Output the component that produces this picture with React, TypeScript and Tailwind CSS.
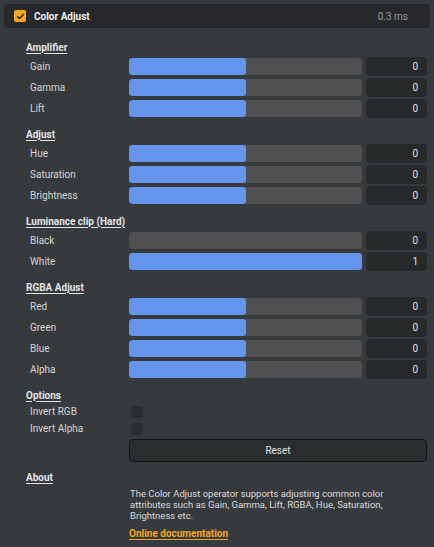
import React from 'react';

type Param = { label: string; value: number; fill: number };
type Group = { title: string; params: Param[] };

const groups: Group[] = [
  {
    title: 'Amplifier',
    params: [
      { label: 'Gain', value: 0, fill: 0.5 },
      { label: 'Gamma', value: 0, fill: 0.5 },
      { label: 'Lift', value: 0, fill: 0.5 },
    ],
  },
  {
    title: 'Adjust',
    params: [
      { label: 'Hue', value: 0, fill: 0.5 },
      { label: 'Saturation', value: 0, fill: 0.5 },
      { label: 'Brightness', value: 0, fill: 0.5 },
    ],
  },
  {
    title: 'Luminance clip (Hard)',
    params: [
      { label: 'Black', value: 0, fill: 0 },
      { label: 'White', value: 1, fill: 1 },
    ],
  },
  {
    title: 'RGBA Adjust',
    params: [
      { label: 'Red', value: 0, fill: 0.5 },
      { label: 'Green', value: 0, fill: 0.5 },
      { label: 'Blue', value: 0, fill: 0.5 },
      { label: 'Alpha', value: 0, fill: 0.5 },
    ],
  },
];

const SectionTitle = ({ children }: { children: React.ReactNode }) => (
  <div className="h-[14px] flex items-center pl-[26px] text-[10px] font-bold text-[#e4e4e4] underline underline-offset-2">
    {children}
  </div>
);

const SliderRow = ({ label, value, fill }: Param) => (
  <div className="h-[21px] flex items-center">
    <div className="w-[129px] pl-[30px] text-[10px] text-[#d6d6d6] shrink-0">{label}</div>
    <div className="w-[233px] h-[17px] rounded-[3px] bg-[#505050] overflow-hidden shrink-0">
      <div className="h-full rounded-[3px] bg-[#6495ed]" style={{ width: `${fill * 100}%` }} />
    </div>
    <div className="ml-[4px] w-[61px] h-[19px] rounded-[4px] bg-[#272a2b] flex items-center justify-end pr-[9px] text-[10px] text-[#e0e0e0]">
      {value}
    </div>
  </div>
);

const CheckRow = ({ label }: { label: string }) => (
  <div className="h-[17px] flex items-center">
    <div className="w-[131px] pl-[30px] text-[10px] text-[#d6d6d6] shrink-0">{label}</div>
    <div className="w-[12px] h-[12px] rounded-[2px] bg-[#2a2d2f]" />
  </div>
);

export default function App() {
  return (
    <div
      className="min-h-screen bg-[#363a3d] pt-[4px] pb-[8px]"
      style={{ fontFamily: 'Roboto, "Liberation Sans", sans-serif' }}
    >
      {/* operator header */}
      <div className="mx-[4px] h-[24px] rounded-[4px] bg-[#262829] flex items-center pl-[10px] pr-[22px]">
        <div className="w-[12px] h-[12px] rounded-[2px] bg-[#f5a623] flex items-center justify-center">
          <svg width="9" height="9" viewBox="0 0 10 10" fill="none" stroke="#2a2a2a" strokeWidth="1.6" strokeLinecap="round" strokeLinejoin="round">
            <polyline points="1.8,5.2 4,7.3 8.2,2.8" />
          </svg>
        </div>
        <div className="ml-[8px] text-[10px] font-bold text-[#f0f0f0]">Color Adjust</div>
        <div className="ml-auto text-[10px] text-[#9a9a9a]">0.3 ms</div>
      </div>

      <div className="pt-[12px] flex flex-col gap-[8px]">
        {groups.map((g) => (
          <div key={g.title} className="flex flex-col">
            <SectionTitle>{g.title}</SectionTitle>
            <div className="mt-[2px] flex flex-col">
              {g.params.map((p) => (
                <SliderRow key={p.label} {...p} />
              ))}
            </div>
          </div>
        ))}

        <div className="flex flex-col">
          <SectionTitle>Options</SectionTitle>
          <div className="mt-[1px] flex flex-col">
            <CheckRow label="Invert RGB" />
            <CheckRow label="Invert Alpha" />
          </div>
          <div className="pl-[129px] pr-[7px]">
            <button className="w-full h-[23px] rounded-[4px] bg-[#2a2d2e] border border-[#141515] text-[10px] text-[#e6e6e6]">
              Reset
            </button>
          </div>
        </div>

        <div className="flex flex-col">
          <SectionTitle>About</SectionTitle>
          <div className="ml-[130px] w-[270px] mt-[4px] text-[9.5px] leading-[11px] text-[#dcdcdc]">
            The Color Adjust operator supports adjusting common color attributes such as Gain, Gamma, Lift, RGBA, Hue, Saturation, Brightness etc.
          </div>
          <div className="pl-[129px] mt-[5px] leading-[12px]">
            <a href="#" className="text-[10px] font-bold text-[#f5a623] underline underline-offset-2">
              Online documentation
            </a>
          </div>
        </div>
      </div>
    </div>
  );
}
